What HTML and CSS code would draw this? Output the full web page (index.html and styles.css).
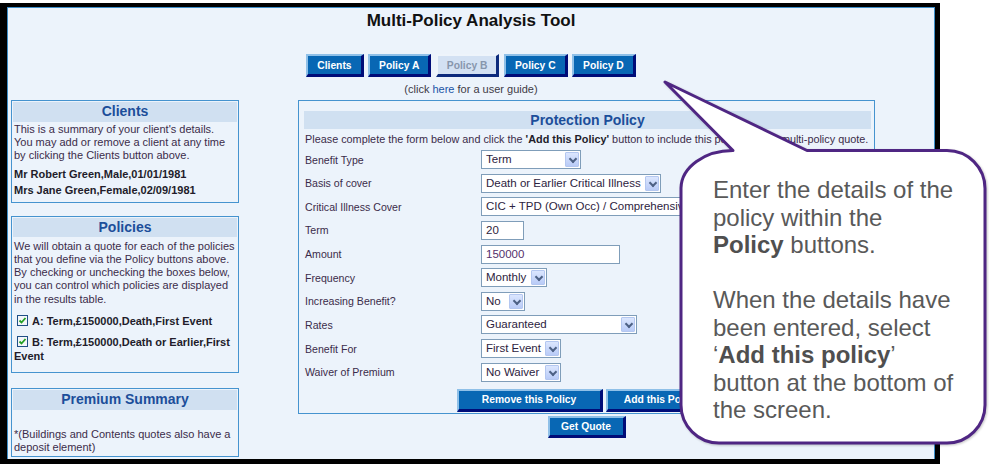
FILE: index.html
```html
<!DOCTYPE html>
<html>
<head>
<meta charset="utf-8">
<link rel="stylesheet" href="styles.css">
</head>
<body>
<div class="stage">
  <div class="frame">
    <div class="inner">
      <h1 class="title">Multi-Policy Analysis Tool</h1>
      <div class="tabs">
        <span class="btn tab">Clients</span>
        <span class="btn tab">Policy A</span>
        <span class="btn tab off">Policy B</span>
        <span class="btn tab">Policy C</span>
        <span class="btn tab">Policy D</span>
      </div>
      <p class="guide">(click <span class="lnk">here</span> for a user guide)</p>
      <div class="cols">
        <aside class="side">
          <section class="box">
            <h2 class="band">Clients</h2>
            <p class="txt">This is a summary of your client's details.<br>You may add or remove a client at any time<br>by clicking the Clients button above.</p>
            <p class="bold first">Mr Robert Green,Male,01/01/1981</p>
            <p class="bold next">Mrs Jane Green,Female,02/09/1981</p>
          </section>
          <section class="box box-pol">
            <h2 class="band">Policies</h2>
            <p class="txt tall">We will obtain a quote for each of the policies<br>that you define via the Policy buttons above.<br>By checking or unchecking the boxes below,<br>you can control which policies are displayed<br>in the results table.</p>
            <p class="chk chk-a"><svg class="cb" width="11" height="11" viewBox="0 0 11 11"><rect x="0.5" y="0.5" width="10" height="10" fill="#f4f6f8" stroke="#1f4f86"/><path d="M2.5 5.5 L4.5 7.5 L8.5 3" fill="none" stroke="#22a022" stroke-width="1.8"/></svg>A: Term,£150000,Death,First Event</p>
            <p class="chk chk-b"><svg class="cb" width="11" height="11" viewBox="0 0 11 11"><rect x="0.5" y="0.5" width="10" height="10" fill="#f4f6f8" stroke="#1f4f86"/><path d="M2.5 5.5 L4.5 7.5 L8.5 3" fill="none" stroke="#22a022" stroke-width="1.8"/></svg>B: Term,£150000,Death or Earlier,First<br>Event</p>
          </section>
          <section class="box box-prem">
            <h2 class="band">Premium Summary</h2>
            <p class="txt note">*(Buildings and Contents quotes also have a<br>deposit element)</p>
          </section>
        </aside>
        <main class="main">
          <section class="panel">
            <h2 class="band pband">Protection Policy</h2>
            <p class="intro">Please complete the form below and click the <b>'Add this Policy'</b> button to include this policy in your multi-policy quote.</p>
            <div class="form">
              <span class="lbl">Benefit Type</span>
              <span class="sel w100">Term<i class="arr"></i></span>
              <span class="lbl">Basis of cover</span>
              <span class="sel w180">Death or Earlier Critical Illness<i class="arr"></i></span>
              <span class="lbl">Critical Illness Cover</span>
              <span class="sel w300">CIC + TPD (Own Occ) / Comprehensive<i class="arr"></i></span>
              <span class="lbl">Term</span>
              <span class="inp w43">20</span>
              <span class="lbl">Amount</span>
              <span class="inp w139 purple">150000</span>
              <span class="lbl">Frequency</span>
              <span class="sel w66">Monthly<i class="arr"></i></span>
              <span class="lbl">Increasing Benefit?</span>
              <span class="sel w44">No<i class="arr"></i></span>
              <span class="lbl">Rates</span>
              <span class="sel w156">Guaranteed<i class="arr"></i></span>
              <span class="lbl">Benefit For</span>
              <span class="sel w80">First Event<i class="arr"></i></span>
              <span class="lbl">Waiver of Premium</span>
              <span class="sel w80">No Waiver<i class="arr"></i></span>
            </div>
            <div class="actions">
              <span class="btn act w146">Remove this Policy</span>
              <span class="btn act w112">Add this Policy</span>
            </div>
          </section>
          <div class="quote"><span class="btn act w78">Get Quote</span></div>
        </main>
      </div>
    </div>
  </div>
  <svg class="callout" width="989" height="468" viewBox="0 0 989 468">
    <path d="M733 150.5 L665 82 L807 150.5 L947 150.5 A38 38 0 0 1 985 188.5 L985 405 A38 38 0 0 1 947 443 L719 443 A38 38 0 0 1 681 405 L681 188 A52 38 0 0 1 733 150.5 Z" fill="#ffffff" stroke="#4f2683" stroke-width="3" stroke-linejoin="round"/>
  </svg>
  <div class="ctext">Enter the details of the<br>policy within the<br><b>Policy</b> buttons.<br><br>When the details have<br>been entered, select<br>‘<b>Add this policy</b>’<br>button at the bottom of<br>the screen.</div>
</div>
</body>
</html>
```
FILE: styles.css
```css
* { box-sizing: border-box; }
body {
  margin: 0;
  background: #ffffff;
  font-family: "Liberation Sans", Arial, sans-serif;
}
.stage {
  position: relative;
  width: 989px;
  height: 468px;
  overflow: hidden;
}
.frame {
  margin-top: 3px;
  width: 940px;
  height: 461px;
  border-style: solid;
  border-color: #000;
  border-width: 4px 5px 5px 7px;
}
.inner {
  height: 100%;
  border: 1px solid #3d8ec8;
  border-bottom: none;
  background: #ecf3fb;
}
.title {
  margin: 3px 0 0;
  font-size: 17px;
  line-height: 20px;
  font-weight: bold;
  text-align: center;
  color: #111;
}
.tabs {
  margin-top: 23px;
  display: flex;
  justify-content: center;
  gap: 4.5px;
}
.btn {
  display: inline-flex;
  align-items: center;
  justify-content: center;
  height: 23px;
  padding: 0 9px;
  background: #0867b4;
  color: #fff;
  font-weight: bold;
  font-size: 10.3px;
  border-style: solid;
  border-width: 2px 3px 3px 2px;
  border-color: #8fc0e8 #000c78 #000c78 #8fc0e8;
  white-space: nowrap;
}
.tab.off {
  background: #d3e1f3;
  color: #8796ad;
  border-color: #eef4fb #0c2a7c #0c2a7c #eef4fb;
}
.guide {
  margin: 5.5px 0 0;
  font-size: 11px;
  line-height: 13px;
  text-align: center;
  color: #3e3a46;
}
.lnk { color: #1b54a6; }
.cols {
  display: flex;
  margin-top: 4.5px;
  padding-left: 3px;
}
.side {
  width: 228px;
  flex: none;
}
.box {
  border: 1px solid #4593cf;
  padding: 1px;
  margin-bottom: 13px;
}
.box-pol { padding-bottom: 9px; margin-bottom: 15px; }
.band {
  margin: 0;
  height: 19.5px;
  background: #d0e0f1;
  color: #1c4e9a;
  font-size: 14px;
  line-height: 19.5px;
  font-weight: bold;
  text-align: center;
}
.txt {
  margin: 1.5px 0 0;
  padding: 0 0 0 1px;
  font-size: 11px;
  line-height: 13px;
  color: #3b2c4a;
}
.txt.tall { line-height: 13.3px; margin-top: 2.5px; }
.bold {
  margin: 0;
  padding-left: 1px;
  font-size: 11px;
  line-height: 13px;
  font-weight: bold;
  color: #221c2a;
}
.bold.first { margin-top: 6px; }
.bold.next { margin-top: 3px; padding-bottom: 3.5px; }
.chk {
  margin: 0;
  padding-left: 1px;
  font-size: 11px;
  line-height: 14px;
  font-weight: bold;
  color: #221c2a;
}
.chk-a { margin-top: 8.5px; }
.chk-b { margin-top: 7px; }
.cb {
  vertical-align: -1px;
  margin: 0 4px 0 3px;
}
.txt.note { margin-top: 18.5px; padding-bottom: 1px; }
.main {
  flex: 1;
  display: flex;
  flex-direction: column;
  align-items: center;
}
.panel {
  width: 577px;
  border: 1px solid #4593cf;
  padding: 10px 3px 1px 5px;
}
.pband {
  height: 18px;
  line-height: 18px;
}
.intro {
  margin: 3.5px 0 0;
  padding-left: 1px;
  font-size: 10.85px;
  line-height: 13px;
  color: #3b2c4a;
  white-space: nowrap;
}
.intro b { color: #221c2a; }
.form {
  margin-top: 4.5px;
  padding-left: 1px;
  display: grid;
  grid-template-columns: 176px auto;
  grid-auto-rows: 19px;
  row-gap: 4.63px;
  align-items: center;
  justify-items: start;
}
.lbl {
  font-size: 10.6px;
  color: #3b2c4a;
}
.sel, .inp {
  position: relative;
  height: 19px;
  background: #fff;
  border: 1px solid #7f9db9;
  font-size: 11.5px;
  line-height: 17px;
  padding-left: 4px;
  color: #2d2340;
  white-space: nowrap;
  overflow: hidden;
}
.purple { color: #54306c; }
.arr {
  position: absolute;
  right: 1px;
  top: 1px;
  width: 14px;
  height: 15px;
  border: 1px solid #b4c7f0;
  border-radius: 1px;
  background: linear-gradient(#dbe6fe, #b9cbf7);
}
.arr::after {
  content: "";
  position: absolute;
  left: 3.5px;
  top: 3px;
  width: 4px;
  height: 4px;
  border-right: 2px solid #4d6185;
  border-bottom: 2px solid #4d6185;
  transform: rotate(45deg);
}
.w43 { width: 43px; }
.w44 { width: 44px; }
.w66 { width: 66px; }
.w80 { width: 80px; }
.w100 { width: 100px; }
.w139 { width: 139px; }
.w156 { width: 156px; }
.w180 { width: 180px; }
.w300 { width: 300px; }
.actions {
  margin-top: 7.3px;
  display: flex;
  justify-content: center;
  gap: 3px;
  padding-right: 1px;
}
.act { padding: 0; }
.w146 { width: 146px; }
.w112 { width: 112px; }
.w78 { width: 78px; height: 22px; }
.quote { margin-top: 2px; }
.callout {
  position: absolute;
  left: 0;
  top: 0;
  pointer-events: none;
  filter: drop-shadow(1px 1.5px 1px rgba(0, 0, 0, 0.22));
}
.ctext {
  position: absolute;
  left: 713px;
  top: 176px;
  font-size: 24px;
  line-height: 27.5px;
  color: #595959;
  white-space: nowrap;
}
.ctext b { color: #4f4f4f; }
```
